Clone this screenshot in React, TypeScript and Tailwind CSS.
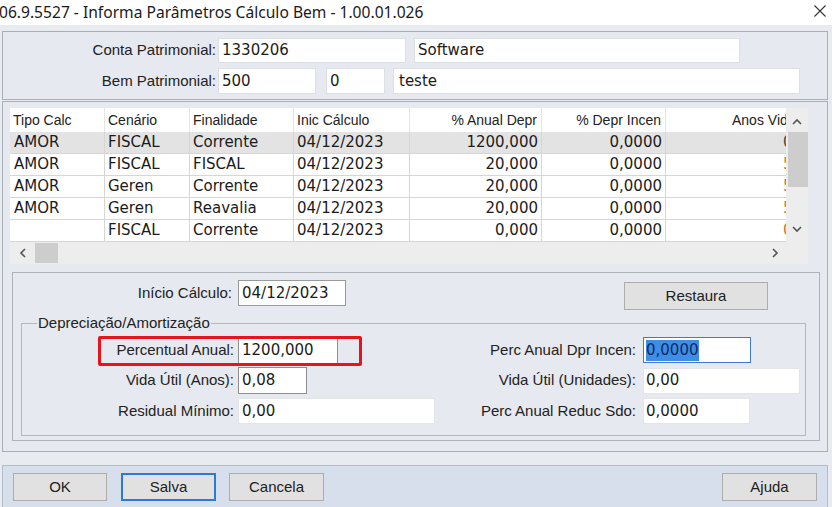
import React from "react";

const label = "font-['Liberation_Sans',Arial,sans-serif] text-[15px] text-[#222]";
const data = "font-['DejaVu_Sans',Verdana,sans-serif] text-[15px] text-[#1b1b1b]";
const head = "font-['Liberation_Sans',Arial,sans-serif] text-[14px] text-[#222]";

const rows = [
  { tipo: "AMOR", cen: "FISCAL", fin: "Corrente", ini: "04/12/2023", anual: "1200,000", incen: "0,0000", anos: "0,08" },
  { tipo: "AMOR", cen: "FISCAL", fin: "FISCAL", ini: "04/12/2023", anual: "20,000", incen: "0,0000", anos: "5,00" },
  { tipo: "AMOR", cen: "Geren", fin: "Corrente", ini: "04/12/2023", anual: "20,000", incen: "0,0000", anos: "5,00" },
  { tipo: "AMOR", cen: "Geren", fin: "Reavalia", ini: "04/12/2023", anual: "20,000", incen: "0,0000", anos: "5,00" },
  { tipo: "", cen: "FISCAL", fin: "Corrente", ini: "04/12/2023", anual: "0,000", incen: "0,0000", anos: "0,00" },
];

function Chevron({ dir }: { dir: "up" | "down" | "left" | "right" }) {
  const pts = {
    up: "1,6 5,2 9,6",
    down: "1,2 5,6 9,2",
    left: "6,1 2,5 6,9",
    right: "2,1 6,5 2,9",
  }[dir];
  const box = dir === "up" || dir === "down" ? "w-[10px] h-[8px]" : "w-[8px] h-[10px]";
  const vb = dir === "up" || dir === "down" ? "0 0 10 8" : "0 0 8 10";
  return (
    <svg viewBox={vb} className={box}>
      <polyline points={pts} fill="none" stroke="#555" strokeWidth="1.6" />
    </svg>
  );
}

function Btn({ children, focus, className }: { children: React.ReactNode; focus?: boolean; className: string }) {
  return (
    <div
      className={`h-[28px] flex items-center justify-center bg-[#e1e1e1] ${label} ${
        focus ? "border-2 border-[#2b7ad6]" : "border border-[#adadad]"
      } ${className}`}
    >
      {children}
    </div>
  );
}

export default function App() {
  return (
    <div className="w-[832px] h-[507px] bg-[#e8ebf0] overflow-hidden flex flex-col">
      {/* Title bar */}
      <div className="h-[25px] shrink-0 bg-white flex items-center">
        <span className="-ml-[1px] font-['Noto_Sans',sans-serif] text-[15.6px] text-[#1a1a1a] whitespace-nowrap">
          06.9.5527 - Informa Parâmetros Cálculo Bem - 1.00.01.026
        </span>
        <svg viewBox="0 0 12 12" className="w-[12px] h-[12px] ml-auto mr-[6px] mb-[4px]">
          <path d="M0.5 0.5 L11.5 11.5 M11.5 0.5 L0.5 11.5" stroke="#333" strokeWidth="1.1" />
        </svg>
      </div>

      {/* Header panel */}
      <div className="mt-[6px] ml-[2px] w-[826px] h-[69px] shrink-0 border border-[#a9aeb6] bg-[#e6e9ef] pt-[6px]">
        <div className="flex items-center h-[25px]">
          <div className={`w-[213px] text-right ${label}`}>Conta Patrimonial:</div>
          <div className={`ml-[2px] w-[188px] h-[25px] bg-white border border-[#dcdfe4] flex items-center pl-[3px] ${data}`}>1330206</div>
          <div className={`ml-[8px] w-[326px] h-[25px] bg-white border border-[#dcdfe4] flex items-center pl-[3px] ${data}`}>Software</div>
        </div>
        <div className="flex items-center h-[26px] mt-[5px]">
          <div className={`w-[213px] text-right ${label}`}>Bem Patrimonial:</div>
          <div className={`ml-[2px] w-[98px] h-[26px] bg-white border border-[#dcdfe4] flex items-center pl-[3px] ${data}`}>500</div>
          <div className={`ml-[10px] w-[59px] h-[26px] bg-white border border-[#dcdfe4] flex items-center pl-[3px] ${data}`}>0</div>
          <div className={`ml-[8px] w-[407px] h-[26px] bg-white border border-[#dcdfe4] flex items-center pl-[5px] ${data}`}>teste</div>
        </div>
      </div>

      {/* Main panel */}
      <div className="mt-[1px] ml-[2px] w-[826px] h-[351px] shrink-0 border border-[#a9aeb6] bg-[#e6e9ef] pt-[6px] pl-[7px]">
        {/* Grid */}
        <div className="w-[798px] h-[156px] flex flex-col">
          <div className="flex h-[134px]">
            <div className="w-[776px] bg-white grid grid-cols-[95px_85px_104px_116px_132px_124px_120px] grid-rows-[24px_22px_22px_22px_22px_22px]">
              <div className={`flex items-center pl-[3px] border-r border-[#e4e4e4] ${head}`}>Tipo Calc</div>
              <div className={`flex items-center pl-[3px] border-r border-[#e4e4e4] ${head}`}>Cenário</div>
              <div className={`flex items-center pl-[3px] border-r border-[#e4e4e4] ${head}`}>Finalidade</div>
              <div className={`flex items-center pl-[3px] border-r border-[#e4e4e4] ${head}`}>Inic Cálculo</div>
              <div className={`flex items-center justify-end pr-[4px] border-r border-[#e4e4e4] ${head}`}>% Anual Depr</div>
              <div className={`flex items-center justify-end pr-[4px] border-r border-[#e4e4e4] ${head}`}>% Depr Incen</div>
              <div className={`flex items-center pl-[66px] overflow-hidden whitespace-nowrap ${head}`}>Anos Vida Útil</div>
              {rows.map((r, i) => {
                const bg = i === 0 ? "bg-[#e3e3e3]" : "bg-white";
                const cell = `flex items-center border-b border-r border-[#d6d6d6] whitespace-nowrap overflow-hidden ${bg} ${data}`;
                return (
                  <React.Fragment key={i}>
                    <div className={`${cell} pl-[4px]`}>{r.tipo}</div>
                    <div className={`${cell} pl-[3px]`}>{r.cen}</div>
                    <div className={`${cell} pl-[3px]`}>{r.fin}</div>
                    <div className={`${cell} pl-[3px]`}>{r.ini}</div>
                    <div className={`${cell} justify-end pr-[3px]`}>{r.anual}</div>
                    <div className={`${cell} justify-end pr-[3px]`}>{r.incen}</div>
                    <div className={`flex items-center border-b border-[#d6d6d6] whitespace-nowrap overflow-hidden pl-[117px] ${bg} font-['DejaVu_Sans',Verdana,sans-serif] text-[15px] ${i === 0 ? "text-[#444]" : "text-[#c07a2c]"}`}>
                      {r.anos}
                    </div>
                  </React.Fragment>
                );
              })}
            </div>
            {/* vertical scrollbar */}
            <div className="w-[22px] bg-[#ededed] flex flex-col items-center">
              <div className="h-[24px] flex items-center justify-center pt-[4px]">
                <Chevron dir="up" />
              </div>
              <div className="w-[20px] h-[55px] bg-[#cdcdcd] ml-[1px]" />
              <div className="flex-1" />
              <div className="h-[24px] flex items-center justify-center pb-[2px]">
                <Chevron dir="down" />
              </div>
            </div>
          </div>
          {/* horizontal scrollbar */}
          <div className="h-[22px] bg-[#ededed] flex items-center">
            <div className="w-[23px] flex justify-center pl-[2px]">
              <Chevron dir="left" />
            </div>
            <div className="ml-[2px] w-[23px] h-[20px] bg-[#cdcdcd]" />
            <div className="flex-1" />
            <div className="w-[30px] mr-[18px] flex justify-center">
              <Chevron dir="right" />
            </div>
          </div>
        </div>

        {/* Edit box */}
        <div className="mt-[8px] ml-[2px] w-[808px] h-[169px] border border-[#aeb3ba] pt-[7px] relative">
          <div className="flex items-start">
            <div className={`w-[219px] h-[26px] flex items-center justify-end ${label}`}>Início Cálculo:</div>
            <div className={`ml-[6px] w-[108px] h-[26px] bg-white border border-[#9a9a9a] flex items-center pl-[3px] ${data}`}>04/12/2023</div>
            <Btn className="ml-[278px] mt-[2px] w-[144px] h-[27px]">Restaura</Btn>
          </div>

          <div className="mt-[13px] ml-[8px] w-[785px] h-[113px] border border-[#b4b8bf] relative pt-[13px]">
            <span className={`absolute -top-[10px] left-[15px] px-[1px] bg-[#e6e9ef] leading-[18px] ${label}`}>
              Depreciação/Amortização
            </span>

            <div className="flex items-center h-[26px]">
              <div className="w-[418px] flex items-center">
                <div className={`w-[212px] text-right ${label}`}>Percentual Anual:</div>
                <div className={`ml-[4px] w-[100px] h-[26px] bg-white border-x border-[#8f8f8f] flex items-center pl-[3px] ${data}`}>1200,000</div>
                <div className="w-[20px] h-[26px] bg-[#e6e9ef]" />
              </div>
              <div className={`w-[196px] text-right ${label}`}>Perc Anual Dpr Incen:</div>
              <div className={`ml-[7px] w-[108px] h-[26px] bg-white border border-[#3d7bd0] flex items-center pl-[2px] ${data}`}>
                <span className="bg-[#3d8ee6] text-[#0e2a64] leading-[21px]">0,0000</span>
              </div>
            </div>

            <div className="flex items-center h-[27px] mt-[4px]">
              <div className="w-[418px] flex items-center">
                <div className={`w-[212px] text-right ${label}`}>Vida Útil (Anos):</div>
                <div className={`ml-[4px] w-[69px] h-[27px] bg-white border border-[#8f8f8f] flex items-center pl-[3px] ${data}`}>0,08</div>
              </div>
              <div className={`w-[196px] text-right ${label}`}>Vida Útil (Unidades):</div>
              <div className={`ml-[7px] w-[157px] h-[26px] bg-white border border-[#e2e4e8] flex items-center pl-[2px] ${data}`}>0,00</div>
            </div>

            <div className="flex items-center h-[26px] mt-[4px]">
              <div className="w-[418px] flex items-center">
                <div className={`w-[212px] text-right ${label}`}>Residual Mínimo:</div>
                <div className={`ml-[4px] w-[197px] h-[26px] bg-white border border-[#e2e4e8] flex items-center pl-[3px] ${data}`}>0,00</div>
              </div>
              <div className={`w-[196px] text-right ${label}`}>Perc Anual Reduc Sdo:</div>
              <div className={`ml-[7px] w-[107px] h-[26px] bg-white border border-[#e2e4e8] flex items-center pl-[2px] ${data}`}>0,0000</div>
            </div>

            {/* red highlight annotation */}
            <div className="absolute left-[76px] top-[12px] w-[264px] h-[30px] border-[3px] border-[#e8141b] rounded-[2px]" />
          </div>
        </div>
      </div>

      {/* Button bar */}
      <div className="mt-[13px] ml-[2px] w-[826px] flex-1 bg-[#d6dfeb] border-t border-x border-[#b3bcc9] pt-[7px] pl-[10px] pr-[10px] flex items-start">
        <Btn className="w-[94px]">OK</Btn>
        <Btn focus className="ml-[14px] w-[95px]">Salva</Btn>
        <Btn className="ml-[13px] w-[95px]">Cancela</Btn>
        <Btn className="ml-auto w-[95px]">Ajuda</Btn>
      </div>
    </div>
  );
}
